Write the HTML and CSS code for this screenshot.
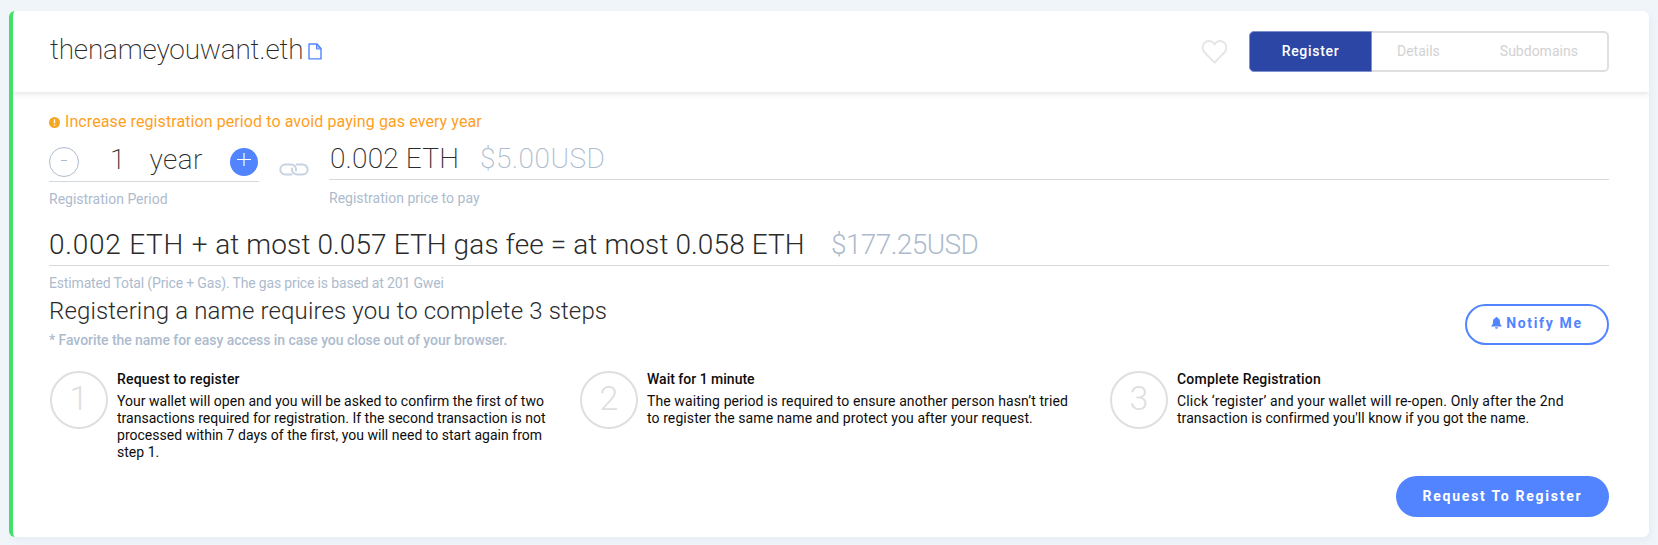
FILE: index.html
```
<!DOCTYPE html>
<html lang="en">
<head>
<meta charset="utf-8">
<title>thenameyouwant.eth</title>
<link rel="stylesheet" href="styles.css">
</head>
<body>
<main class="card">
  <header class="top">
    <h1 class="name">thenameyouwant.eth</h1>
    <svg class="copy" width="14" height="17" viewBox="0 0 14 17"><path d="M1 1h8l4 4.500V15.900H1z" fill="none" stroke="#5284ff" stroke-width="1.400" stroke-linejoin="round"/><path d="M8.500 1v5H13z" fill="#a9c1ff" stroke="#5284ff" stroke-width="1"/></svg>
    <svg class="heart" width="27" height="26" viewBox="0 0 27 26"><path d="M13.500 23.600 3.600 13.500C1.200 10.900 1.100 6.400 3.500 3.900 6.200 1.100 11 1.100 13.500 5.400 16 1.100 20.800 1.100 23.500 3.900 25.900 6.400 25.800 10.900 23.400 13.500z" fill="none" stroke="#e6e6e6" stroke-width="2" stroke-linejoin="round"/></svg>
    <nav class="tabs">
      <a class="tab active">Register</a>
      <a class="tab details">Details</a>
      <a class="tab subs">Subdomains</a>
    </nav>
  </header>
  <section class="body">
    <p class="warning"><svg width="11" height="11" viewBox="0 0 11 11"><circle cx="5.500" cy="5.500" r="5.500" fill="#f5a623"/><path d="M5.500 2.200v4M5.500 7.400v1.400" stroke="#fff" stroke-width="1.400"/></svg><span>Increase registration period to avoid paying gas every year</span></p>
    <div class="pricing">
      <div class="period">
        <div class="stepper">
          <button class="round minus"><svg width="30" height="30" viewBox="0 0 30 30"><path d="M12 13.500h6" stroke="#adbbcd"/></svg></button>
          <span class="count">1</span><span class="unit">year</span>
          <button class="round plus"><svg width="28" height="28" viewBox="0 0 28 28"><path d="M7 11.500h14M14 5v13" stroke="#fff" stroke-width="1.200"/></svg></button>
        </div>
        <div class="label l-period">Registration Period</div>
      </div>
      <svg class="chain" width="30" height="13" viewBox="0 0 30 13"><g fill="none" stroke="#c7d3e3" stroke-width="2" stroke-linecap="round"><path d="M12.500 11.500H6.300a5 5 0 0 1 0-10H12a5 5 0 0 1 5 6"/><path d="M17.500 1.500h6.200a5 5 0 0 1 0 10H18a5 5 0 0 1-5-6"/></g></svg>
      <div class="price">
        <div class="amount thin"><span class="eth">0.002 ETH</span><span class="usd">$5.00USD</span></div>
        <div class="label l-price">Registration price to pay</div>
      </div>
    </div>
    <div class="total">
      <div class="amount sum"><span class="eth"><span class="base">0.002 ETH +</span> at most 0.057 ETH gas fee = at most 0.058 ETH</span><span class="usd">$177.25USD</span></div>
      <div class="label l-total">Estimated Total (Price + Gas). The gas price is based at 201 Gwei</div>
    </div>
    <div class="intro">
      <div>
        <h2>Registering a name requires you to complete 3 steps</h2>
        <p class="hint">* Favorite the name for easy access in case you close out of your browser.</p>
      </div>
      <button class="pill notify"><svg width="11" height="12" viewBox="0 0 11 12"><path d="M5.500 0c.7 0 1 .5 1 1 1.700.4 2.500 1.800 2.500 3.500 0 2.600.6 3.300 1.600 4.200v.9H.4v-.9C1.400 7.800 2 7.100 2 4.500 2 2.800 2.800 1.400 4.500 1c0-.5.3-1 1-1zM4 10.300h3a1.500 1.500 0 0 1-3 0z" fill="#5284ff"/></svg>Notify Me</button>
    </div>
    <div class="steps">
      <article class="step">
        <div class="num">1</div>
        <div class="text"><h3>Request to register</h3>
        <p>Your wallet will open and you will be asked to confirm the first of two<br>transactions required for registration. If the second transaction is not<br>processed within 7 days of the first, you will need to start again from<br>step 1.</p></div>
      </article>
      <article class="step two">
        <div class="num">2</div>
        <div class="text"><h3>Wait for 1 minute</h3>
        <p>The waiting period is required to ensure another person hasn’t tried<br>to register the same name and protect you after your request.</p></div>
      </article>
      <article class="step three">
        <div class="num">3</div>
        <div class="text"><h3>Complete Registration</h3>
        <p><span class="wide">Click ‘register’ and your wallet will re-open. Only after the 2nd</span><br>transaction is confirmed you'll know if you got the name.</p></div>
      </article>
    </div>
    <footer class="actions"><button class="pill request">Request To Register</button></footer>
  </section>
</main>
</body>
</html>
```
FILE: styles.css
```
* { box-sizing: border-box; margin: 0; padding: 0; }
body {
  height: 545px;
  overflow: hidden;
  padding: 11px 9px 0;
  background: #f0f5fa;
  font-family: Roboto, "Liberation Sans", sans-serif;
  font-size: 14px;
  color: #2b2b2b;
  white-space: nowrap;
}
button { font: inherit; border: 0; background: none; flex: none; }
svg { display: block; flex: none; }
.card {
  height: 526px;
  background: #fff;
  border-left: 4px solid #42e068;
  border-radius: 6px;
  box-shadow: 3px 4px 6px rgba(229, 236, 242, .8);
}
.top {
  display: flex;
  height: 81px;
  padding: 20px 40px 0 37px;
  box-shadow: 0 2px 5px rgba(0, 0, 0, .1);
  clip-path: inset(0 0 -8px 0);
}
.name { width: 257px; margin-top: 1px; font-size: 28px; font-weight: 200; line-height: 36px; letter-spacing: -.2px; }
.copy { margin: 12px 0 0 1px; }
.heart { margin: 8px 21px 0 auto; }
.tabs {
  display: flex;
  width: 360px;
  height: 41px;
  border: 2px solid #dfdfdf;
  border-radius: 5px;
}
.tab { line-height: 36px; color: #d2d2d2; }
.active {
  width: 123px;
  margin: -2px 0 -2px -2px;
  border: 1px solid #7f92cd;
  border-radius: 5px 0 0 5px;
  background: #2c46a6;
  color: #fff;
  font-weight: 500;
  line-height: 38px;
  text-align: center;
  letter-spacing: .7px;
}
.details { margin-left: 25px; }
.subs { margin-left: 60px; }
.body { padding: 20px 40px 0 36px; }
.warning { display: flex; align-items: center; gap: 5px; height: 20px; font-size: 16px; line-height: 20px; letter-spacing: .09px; color: #ffa01f; }
.pricing { display: flex; height: 94px; }
.period { width: 210px; padding-top: 10px; }
.stepper { display: flex; height: 40px; padding-top: 5px; border-bottom: 1px solid #d3d9dd; }
.round { border-radius: 50%; }
.minus { width: 30px; height: 30px; border: 1px solid #adbbcd; }
.minus svg { margin: -1px; }
.plus { width: 28px; height: 28px; margin: 1px 1px 0 auto; background: #5284ff; }
.count, .unit { font-size: 28px; font-weight: 200; line-height: 30px; margin-top: -2px; }
.count { margin-left: 31px; }
.unit { letter-spacing: .45px; margin-left: 24px; }
.label { font-size: 14px; font-weight: 400; line-height: 20px; color: #adbbcd; }
.l-period { margin-top: 7px; }
.chain { margin: 31px 20px 0; }
.price { flex: 1; }
.amount { display: flex; height: 48px; font-size: 28px; line-height: 36px; border-bottom: 1px solid #d5d9dc; }
.usd { color: #adbbcd; }
.thin { padding-top: 9px; font-weight: 200; }
.thin .eth { width: 150px; margin-left: 1px; letter-spacing: .2px; }
.thin .usd { letter-spacing: .5px; }
.l-price { margin-top: 8px; }
.total .amount { height: 40px; padding-top: 1px; font-weight: 300; }
.sum .eth { width: 782px; letter-spacing: .1px; }
.sum .base { letter-spacing: .75px; }
.sum .usd { letter-spacing: -.6px; }
.l-total { margin-top: 7px; letter-spacing: -.16px; }
.intro { display: flex; justify-content: space-between; height: 72px; }
h2 { margin-top: 3px; font-size: 24px; font-weight: 300; line-height: 30px; letter-spacing: .14px; }
.hint { margin-top: 4px; font-weight: 500; line-height: 20px; letter-spacing: -.06px; color: #adbbcd; }
.pill { display: flex; align-items: center; justify-content: center; height: 41px; border-radius: 21px; font-weight: 700; }
.notify { width: 144px; margin-top: 11px; border: 2px solid #5284ff; color: #5284ff; letter-spacing: 1.65px; gap: 4px; padding-bottom: 3px; }
.steps { display: grid; grid-template-columns: 530px 530px 1fr; height: 111px; padding-top: 6px; }
.step { display: flex; gap: 9px; color: #0d0d0d; }
.num { width: 58px; height: 58px; margin-left: 1px; border: 2px solid #dfdfdf; border-radius: 50%; color: #dfdfdf; font-size: 34px; font-weight: 300; line-height: 50px; text-align: center; }
h3 { font-size: 14px; font-weight: 500; line-height: 17px; letter-spacing: .2px; }
.step p { margin-top: 5px; line-height: 17px; letter-spacing: .02px; }
.two h3 { letter-spacing: 0; }
.two p { letter-spacing: .09px; }
.three p { letter-spacing: .04px; }
.three .wide { letter-spacing: .16px; }
.actions { display: flex; justify-content: flex-end; }
.request { width: 213px; background: #5284ff; color: #fff; letter-spacing: 1.75px; padding-bottom: 2px; }
```
